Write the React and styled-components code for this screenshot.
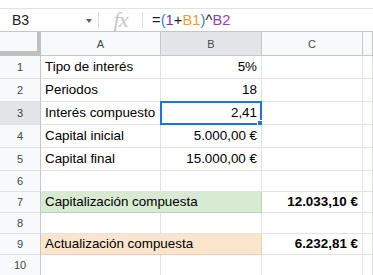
import styled, { createGlobalStyle } from "styled-components";

const GlobalStyle = createGlobalStyle`
  html, body {
    margin: 0;
    padding: 0;
    background: #ffffff;
    overflow: hidden;
  }
  * { box-sizing: border-box; }
`;

const Page = styled.div`
  width: 373px;
  height: 275px;
  padding-top: 8px;
  font-family: "Liberation Sans", Arial, sans-serif;
  color: #000000;
  overflow: hidden;
`;

const FormulaBar = styled.div`
  display: flex;
  align-items: center;
  height: 24px;
  border-top: 1px solid #e1e3e1;
  border-bottom: 1px solid #c4c7c5;
`;

const NameBox = styled.div`
  width: 98px;
  display: flex;
  align-items: center;
  justify-content: space-between;
  padding: 0 6px 0 12px;
  font-size: 14px;
  color: #202124;
`;

const Caret = styled.span`
  width: 0;
  height: 0;
  border-left: 3.5px solid transparent;
  border-right: 3.5px solid transparent;
  border-top: 4px solid #5f6368;
  margin-top: 2px;
`;

const Divider = styled.span`
  width: 1px;
  height: 16px;
  background: #dadce0;
`;

const FxLabel = styled.div`
  width: 43px;
  text-align: center;
  font-family: "Liberation Serif", "Times New Roman", serif;
  font-style: italic;
  font-size: 22px;
  color: #c4c7c5;
  line-height: 22px;
  letter-spacing: -1px;
`;

const Formula = styled.div`
  padding-left: 9px;
  font-size: 14.6px;
  color: #202124;
  letter-spacing: 0.1px;
`;

const Tok = styled.span`
  color: ${(p) => p.$c || "#202124"};
`;

const Row = styled.div`
  display: grid;
  grid-template-columns: 41px 120px 101px 101px 1fr;
  height: ${(p) => p.$h}px;
`;

const Corner = styled.div`
  background: #f8f9fa;
  border-right: 4px solid #c0c0c0;
  border-bottom: 5px solid #c0c0c0;
`;

const ColHead = styled.div`
  display: flex;
  align-items: center;
  justify-content: center;
  background: ${(p) => (p.$active ? "#e3e5e8" : "#f8f9fa")};
  border-right: 1px solid #c4c7c5;
  border-bottom: 1px solid #c4c7c5;
  font-size: 11px;
  color: #444746;
`;

const RowHead = styled.div`
  display: flex;
  align-items: center;
  justify-content: center;
  background: ${(p) => (p.$active ? "#e3e5e8" : "#f8f9fa")};
  border-right: 1px solid #c4c7c5;
  border-bottom: 1px solid #e1e3e1;
  font-size: 11px;
  color: #444746;
`;

const Cell = styled.div`
  position: relative;
  display: flex;
  align-items: center;
  justify-content: ${(p) => (p.$right ? "flex-end" : "flex-start")};
  padding: ${(p) => (p.$right ? "0 4px 1px 0" : "0 0 1px 4px")};
  grid-column: span ${(p) => p.$span || 1};
  background: ${(p) => p.$bg || "#ffffff"};
  border-right: 1px solid ${(p) => p.$line || "#e1e3e1"};
  border-bottom: 1px solid ${(p) => p.$line || "#e1e3e1"};
  font-size: 13.4px;
  font-weight: ${(p) => (p.$bold ? 700 : 400)};
  white-space: nowrap;
`;

const Selection = styled.div`
  position: absolute;
  left: -1px;
  top: -1px;
  right: -1px;
  bottom: -1px;
  border: 2px solid #1a73e8;
  pointer-events: none;
`;

const Handle = styled.div`
  position: absolute;
  right: -4px;
  bottom: -4px;
  width: 7px;
  height: 7px;
  background: #1a73e8;
  border: 1px solid #ffffff;
`;

const GREEN = { bg: "#d9ead3", line: "#bcd4b2" };
const ORANGE = { bg: "#fce5cd", line: "#efcfae" };

const rows = [
  { n: 1, h: 23, a: "Tipo de interés", b: "5%" },
  { n: 2, h: 23, a: "Periodos", b: "18" },
  { n: 3, h: 23, a: "Interés compuesto", b: "2,41", sel: true },
  { n: 4, h: 23, a: "Capital inicial", b: "5.000,00 €" },
  { n: 5, h: 23, a: "Capital final", b: "15.000,00 €" },
  { n: 6, h: 21 },
  { n: 7, h: 21, merged: "Capitalización compuesta", c: "12.033,10 €", fill: GREEN },
  { n: 8, h: 21 },
  { n: 9, h: 21, merged: "Actualización compuesta", c: "6.232,81 €", fill: ORANGE },
  { n: 10, h: 21 },
];

const SheetRow = ({ row }) => (
  <Row $h={row.h}>
    <RowHead $active={row.sel}>{row.n}</RowHead>
    {row.merged ? (
      <Cell $span={2} $bg={row.fill.bg} $line={row.fill.line}>
        {row.merged}
      </Cell>
    ) : (
      <>
        <Cell>{row.a}</Cell>
        <Cell $right>
          {row.b}
          {row.sel && (
            <Selection>
              <Handle />
            </Selection>
          )}
        </Cell>
      </>
    )}
    <Cell $right $bold>
      {row.c}
    </Cell>
    <Cell />
  </Row>
);

const App = () => (
  <>
    <GlobalStyle />
    <Page>
      <FormulaBar>
        <NameBox>
          <span>B3</span>
          <Caret />
        </NameBox>
        <Divider />
        <FxLabel>fx</FxLabel>
        <Divider />
        <Formula>
          <Tok>=</Tok>
          <Tok $c="#3b78e7">(</Tok>
          <Tok $c="#5b3cc4">1</Tok>
          <Tok>+</Tok>
          <Tok $c="#f29b38">B1</Tok>
          <Tok $c="#3b78e7">)</Tok>
          <Tok>^</Tok>
          <Tok $c="#8e44ad">B2</Tok>
        </Formula>
      </FormulaBar>
      <Row $h={24}>
        <Corner />
        <ColHead>A</ColHead>
        <ColHead $active>B</ColHead>
        <ColHead>C</ColHead>
        <ColHead />
      </Row>
      {rows.map((r) => (
        <SheetRow key={r.n} row={r} />
      ))}
    </Page>
  </>
);

export default App;
